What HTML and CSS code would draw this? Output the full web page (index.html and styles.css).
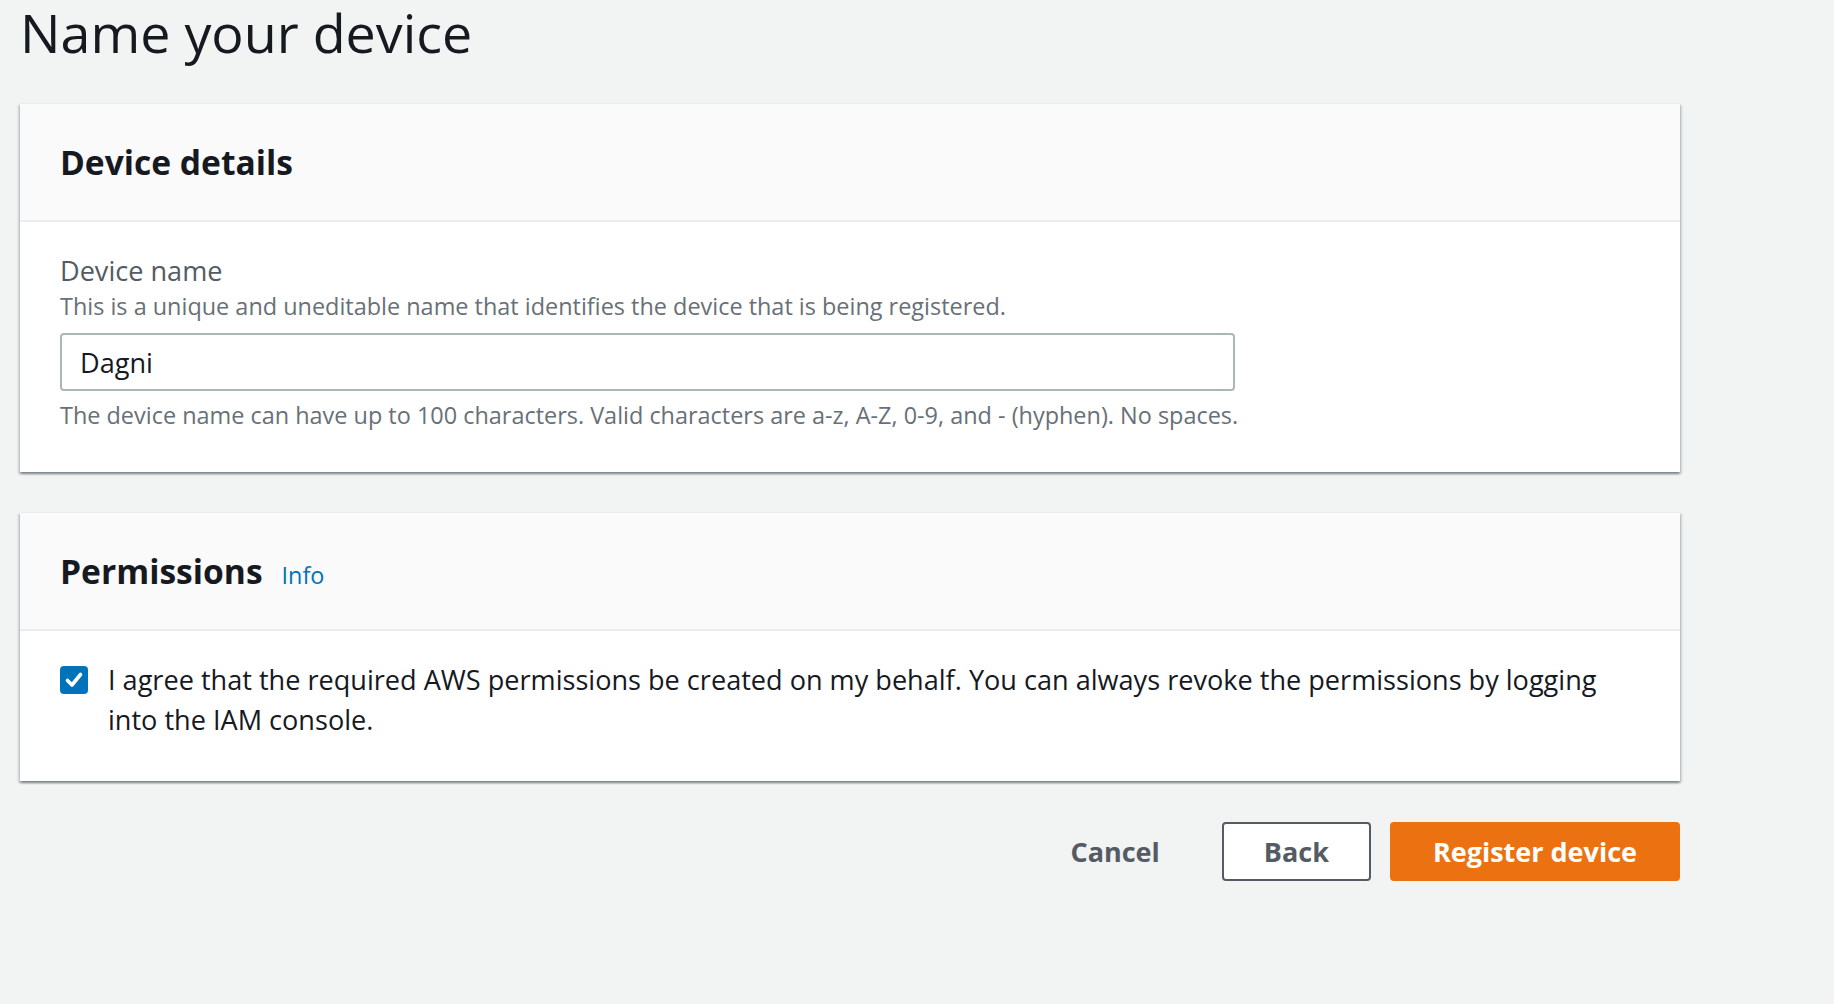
FILE: index.html
```html
<!DOCTYPE html>
<html lang="en">
<head>
<meta charset="utf-8">
<title>Name your device</title>
<link rel="stylesheet" href="styles.css">
</head>
<body>
<main class="page">
  <h1 class="page-title">Name your device</h1>

  <section class="card">
    <header class="card-header">
      <div class="card-heading">
        <h2 class="card-title">Device details</h2>
      </div>
    </header>
    <div class="card-body">
      <label class="field-label" for="device-name">Device name</label>
      <div class="field-desc">This is a unique and uneditable name that identifies the device that is being registered.</div>
      <input class="text-input" id="device-name" type="text" value="Dagni">
      <div class="field-constraint">The device name can have up to 100 characters. Valid characters are a-z, A-Z, 0-9, and - (hyphen). No spaces.</div>
    </div>
  </section>

  <section class="card card-second">
    <header class="card-header">
      <div class="card-heading">
        <h2 class="card-title">Permissions</h2>
        <a class="info-link" href="#">Info</a>
      </div>
    </header>
    <div class="card-body">
      <div class="checkbox-row">
        <span class="checkbox">
          <svg viewBox="0 0 28 28" width="28" height="28" aria-hidden="true">
            <path d="M7.5 14.5 L12 19 L20.5 8.5" fill="none" stroke="#ffffff" stroke-width="3.6" stroke-linecap="round" stroke-linejoin="round"/>
          </svg>
        </span>
        <span class="checkbox-text">I agree that the required AWS permissions be created on my behalf. You can always revoke the permissions by logging into the IAM console.</span>
      </div>
    </div>
  </section>

  <div class="actions">
    <button class="btn btn-link" type="button">Cancel</button>
    <button class="btn btn-normal" type="button">Back</button>
    <button class="btn btn-primary" type="button">Register device</button>
  </div>
</main>
</body>
</html>
```
FILE: styles.css
```css
html, body {
  margin: 0;
  padding: 0;
}

body {
  background: #f2f3f3;
  font-family: "Open Sans", "Noto Sans", sans-serif;
  color: #16191f;
  font-size: 27.1px;
  line-height: 40px;
}

.page {
  width: 1660px;
  padding: 0 0 0 20px;
}

.page-title {
  margin: 0 0 39px 0;
  font-size: 53.8px;
  line-height: 64px;
  font-weight: 400;
  color: #16191f;
}

.card {
  background: #ffffff;
  border-top: 1px solid #eaeded;
  box-shadow: 0 2px 2px 0 rgba(0, 28, 36, 0.35),
              2px 2px 2px 0 rgba(0, 28, 36, 0.12),
              -2px 2px 2px 0 rgba(0, 28, 36, 0.12);
}

.card-second {
  margin-top: 40px;
}

.card-header {
  height: 118px;
  box-sizing: border-box;
  padding: 0 40px;
  background: #fafafa;
  border-bottom: 2px solid #eaeded;
  display: flex;
  align-items: center;
}

.card-heading {
  display: flex;
  align-items: baseline;
  gap: 19px;
}

.card-title {
  margin: 0;
  font-size: 33.6px;
  line-height: 44px;
  font-weight: 700;
  color: #16191f;
}

.info-link {
  font-size: 23.4px;
  line-height: 31px;
  color: #0073bb;
  text-decoration: none;
}

.card-body {
  padding: 29px 40px 41px 40px;
}

.field-label {
  display: block;
  font-size: 27.1px;
  line-height: 40px;
  color: #545b64;
}

.field-desc,
.field-constraint {
  font-size: 23.45px;
  line-height: 31px;
  color: #687078;
}

.text-input {
  display: block;
  box-sizing: border-box;
  margin-top: 11px;
  width: 1175px;
  height: 58px;
  padding: 0 18px;
  border: 2px solid #aab7b8;
  border-radius: 4px;
  background: #ffffff;
  font-family: inherit;
  font-size: 27.1px;
  color: #16191f;
  outline: none;
}

.field-constraint {
  margin-top: 9px;
}

.checkbox-row {
  display: flex;
  align-items: flex-start;
  gap: 20px;
}

.checkbox {
  flex: none;
  width: 28px;
  height: 28px;
  margin-top: 6px;
  border-radius: 4px;
  background: #0073bb;
  display: flex;
}

.checkbox svg {
  display: block;
}

.checkbox-text {
  font-size: 27.1px;
  line-height: 40px;
  color: #16191f;
}

.actions {
  margin-top: 41px;
  display: flex;
  justify-content: flex-end;
  align-items: center;
  gap: 19px;
}

.btn {
  box-sizing: border-box;
  height: 59px;
  padding: 0 41px;
  border: 2px solid transparent;
  border-radius: 4px;
  font-family: inherit;
  font-size: 27px;
  font-weight: 700;
  line-height: 55px;
  cursor: pointer;
}

.btn-link {
  background: transparent;
  color: #545b64;
}

.btn-normal {
  padding: 0 40px;
  background: #ffffff;
  border-color: #545b64;
  color: #545b64;
}

.btn-primary {
  background: #ec7211;
  border-color: #ec7211;
  color: #ffffff;
}
```
